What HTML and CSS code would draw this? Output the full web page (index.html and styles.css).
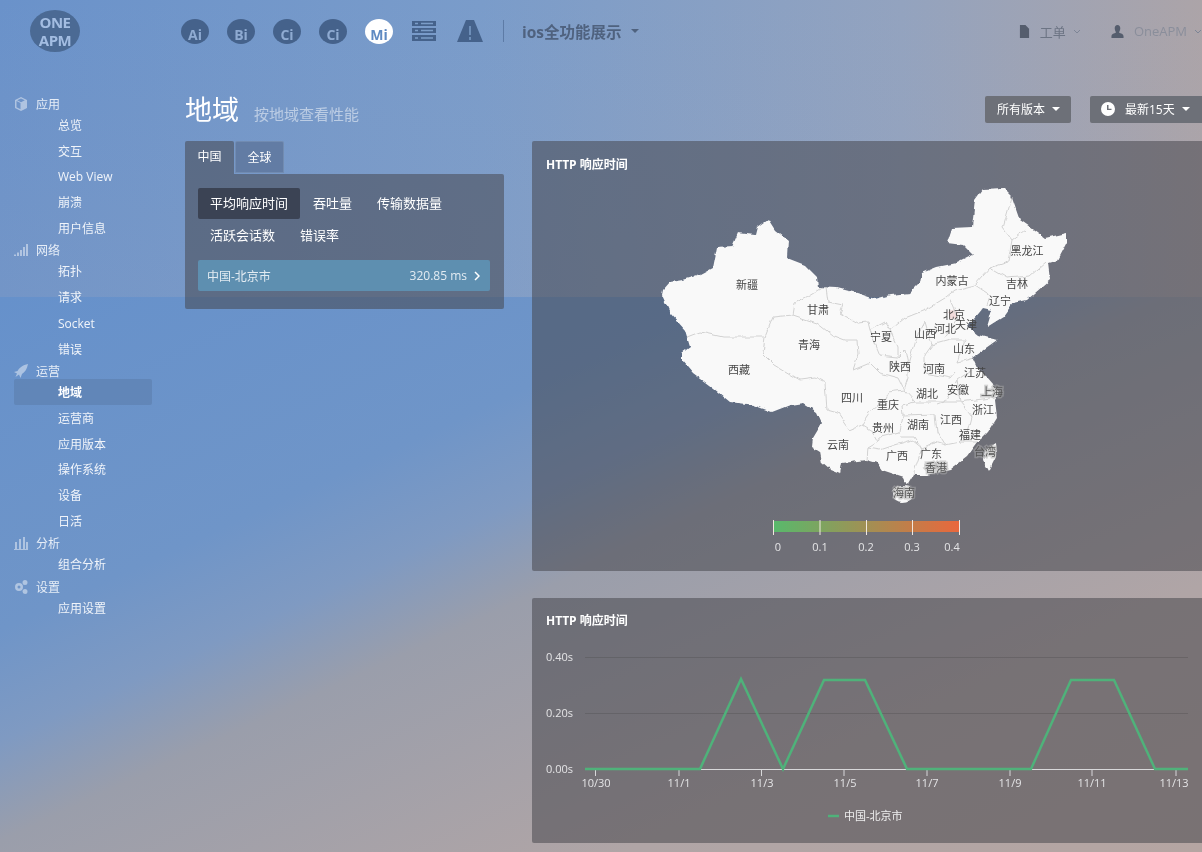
FILE: index.html
```html
<!DOCTYPE html>
<html lang="zh">

<head>
    <meta charset="UTF-8">
    <title>地域</title>
    <link rel="stylesheet" href="styles.css">
</head>

<body>
    <div class="seam"></div>
    <header class="topbar">
        <div class="logo"><span>ONE</span><span>APM</span></div>
        <nav class="apps">
            <span class="app">Ai</span>
            <span class="app">Bi</span>
            <span class="app">Ci</span>
            <span class="app">Ci</span>
            <span class="app app--on">Mi</span>
            <svg class="app-icon" viewBox="0 0 26 24">
                <path d="M1 2h24v5H1zM1 9h24v5H1zM1 16h24v6H1z" />
                <path class="app-icon__cut" d="M4 4.500h3M4 11.500h3M4 19h3M10 4.500h12M10 11.500h12M10 19h12" />
            </svg>
            <svg class="app-icon" viewBox="0 0 26 24">
                <path d="M9 1h8l9 22H0z" />
                <path class="app-icon__cut" d="M13 7v9M13 18v3" />
            </svg>
        </nav>
        <div class="project">ios全功能展示<i class="caret caret--dark"></i></div>
        <div class="account">
            <svg class="account__icon" viewBox="0 0 12 14"><path d="M1 0h6l4 4v10H1z" /></svg>
            <span class="account__name">工单</span>
            <svg class="chev" viewBox="0 0 8 5"><path d="M1 1l3 3 3-3" /></svg>
            <svg class="account__icon account__icon--user" viewBox="0 0 14 14"><path d="M7 0c2 0 3 1.500 3 3.500S9 7 8.500 8c2 1 5 1.500 5 4v2H.5v-2c0-2.500 3-3 5-4C5 7 4 5.500 4 3.500S5 0 7 0z" /></svg>
            <span class="account__name account__name--light">OneAPM</span>
            <svg class="chev" viewBox="0 0 8 5"><path d="M1 1l3 3 3-3" /></svg>
        </div>
    </header>

    <div class="layout">
        <aside class="side">
            <div class="side__head">
                <svg viewBox="0 0 14 14"><path d="M7 0l6 3v8l-6 3-6-3V3zM2.500 4v6.200L6.500 12.300V6zM7 1.500L3.200 3.300 7 5.200l3.800-1.900z" /></svg>
                应用
            </div>
            <a class="side__item">总览</a>
            <a class="side__item">交互</a>
            <a class="side__item">Web View</a>
            <a class="side__item">崩溃</a>
            <a class="side__item">用户信息</a>
            <div class="side__head">
                <svg viewBox="0 0 14 14"><path d="M0 13h2v-1.500H0zM3 13h2V9.500H3zM6 13h2V7H6zM9 13h2V4H9zM12 13h2V1h-2z" /></svg>
                网络
            </div>
            <a class="side__item">拓扑</a>
            <a class="side__item">请求</a>
            <a class="side__item">Socket</a>
            <a class="side__item">错误</a>
            <div class="side__head">
                <svg viewBox="0 0 14 14"><path d="M14 0C9 1 5 4 3.500 7L0 8l3 1.500L1.500 13 5 10.500 6.500 14l1.500-4C11 8 13 5 14 0z" /></svg>
                运营
            </div>
            <a class="side__item side__item--on">地域</a>
            <a class="side__item">运营商</a>
            <a class="side__item">应用版本</a>
            <a class="side__item">操作系统</a>
            <a class="side__item">设备</a>
            <a class="side__item">日活</a>
            <div class="side__head">
                <svg viewBox="0 0 14 14"><path d="M1 6h2v7H1zM5 3h2v10H5zM9 1h2v12H9zM12 6h2v7h-2zM0 13h14v1H0z" /></svg>
                分析
            </div>
            <a class="side__item">组合分析</a>
            <div class="side__head">
                <svg viewBox="0 0 14 14"><path fill-rule="evenodd" d="M5 3a4 4 0 1 1 0 8 4 4 0 0 1 0-8zm0 2.500a1.500 1.500 0 1 0 0 3 1.500 1.500 0 0 0 0-3zM11 0a2.500 2.500 0 1 1 0 5 2.500 2.500 0 0 1 0-5zm0 9a2.500 2.500 0 1 1 0 5 2.500 2.500 0 0 1 0-5z" /></svg>
                设置
            </div>
            <a class="side__item">应用设置</a>
        </aside>

        <main class="main">
            <div class="page-head">
                <h1>地域</h1>
                <small>按地域查看性能</small>
                <div class="page-head__btns">
                    <button class="btn">所有版本<i class="caret"></i></button>
                    <button class="btn btn--time">
                        <svg viewBox="0 0 14 14"><path fill-rule="evenodd" d="M7 0a7 7 0 1 1 0 14A7 7 0 0 1 7 0zM6 3v5h4.500V6.700H7.500V3z" /></svg>
                        最新15天<i class="caret"></i>
                    </button>
                </div>
            </div>

            <div class="cols">
                <section class="left">
                    <div class="tabs">
                        <span class="tab tab--on">中国</span>
                        <span class="tab">全球</span>
                    </div>
                    <div class="left__box">
                        <div class="pills">
                            <span class="pill pill--on">平均响应时间</span>
                            <span class="pill">吞吐量</span>
                            <span class="pill">传输数据量</span>
                            <span class="pill">活跃会话数</span>
                            <span class="pill">错误率</span>
                        </div>
                        <div class="city">
                            <span>中国-北京市</span>
                            <span class="city__val">320.85 ms</span>
                            <svg class="city__arrow" viewBox="0 0 6 10"><path d="M1 1l4 4-4 4" /></svg>
                        </div>
                    </div>
                </section>

                <section class="right">
                    <div class="panel panel--map">
                        <h4>HTTP 响应时间</h4>
                        <svg class="map" viewBox="532 175 670 396">
                            <defs>
                                <filter id="rough" x="-5%" y="-5%" width="110%" height="110%">
                                    <feTurbulence type="fractalNoise" baseFrequency="0.11" numOctaves="2" seed="4" />
                                    <feDisplacementMap in="SourceGraphic" scale="5" xChannelSelector="R" yChannelSelector="G" />
                                </filter>
                                <linearGradient id="scale">
                                    <stop offset="0" stop-color="#58b96c" />
                                    <stop offset="1" stop-color="#ea673c" />
                                </linearGradient>
                            </defs>
                            <g filter="url(#rough)">
                                <path class="land" d="M663 290L670 282 683 280 700 275 713 268 717 248 732 247 738 233 755 235 757 227 768 219 775 230 788 240 787 258 805 265 817 277 818 287 837 288 857 293 875 299 890 295 910 293 920 283 922 273 937 267 957 263 973 255 963 245 947 243 952 228 972 227 975 200 983 189 1003 188 1012 197 1020 220 1030 227 1045 238 1067 233 1067 243 1058 260 1048 263 1050 280 1027 300 1013 303 1003 317 987 327 992 310 983 308 973 320 968 327 978 335 997 340 983 350 973 357 978 368 987 377 1000 392 995 400 997 417 987 433 978 442 967 457 950 470 927 475 913 475 907 485 903 477 882 470 877 463 867 460 842 463 840 474 830 470 822 463 820 452 812 447 813 438 822 423 817 412 803 403 790 405 772 412 753 405 730 402 713 388 693 373 682 360 682 353 690 347 685 330 670 313 662 295z" />
                                <ellipse class="land" cx="903" cy="494" rx="11" ry="8" />
                                <path class="land" d="M996 443L997 455 989 471 983 460 985 450z" />
                                <path class="beijing" d="M948 311l5-2 5 3-1 6-6 1-3-3z" />
                                <path class="border" d="M687 337L700 332 723 337 765 337 773 317 793 315 795 303 810 295 823 287" />
                                <path class="border" d="M826 287L828 302 843 305 840 313 857 323 868 322 870 330" />
                                <path class="border" d="M870 330L885 322 890 330 898 347 898 357 880 355 875 343z" />
                                <path class="border" d="M793 315L817 323 832 335 845 340 857 340 858 355 853 370" />
                                <path class="border" d="M765 337L763 353 775 365 800 380 815 378 825 383 827 410 838 413 850 430 862 425 872 431 878 442 868 448 867 460" />
                                <path class="border" d="M853 370L870 363 880 373 898 378 904 390 888 392 884 400 872 410 862 425" />
                                <path class="border" d="M898 357L905 350 908 365 908 378 904 390 915 402 902 405 903 416 900 432 880 437 878 442" />
                                <path class="border" d="M890 330L905 318 925 310 945 298 955 290 975 285 990 268 1008 262 1012 240 1025 230" />
                                <path class="border" d="M908 365L915 340 925 322 932 345 925 355 925 373 950 378 955 372" />
                                <path class="border" d="M932 345L950 340 965 340 958 362 975 358" />
                                <path class="border" d="M915 402L945 402 957 380 975 368" />
                                <path class="border" d="M957 380L960 402 975 400 990 398" />
                                <path class="border" d="M903 416L935 415 937 432 945 445 960 442 978 442" />
                                <path class="border" d="M937 405L945 402 960 402 972 417 968 432 958 442" />
                                <path class="border" d="M900 437L915 437 922 448 935 442 945 445" />
                                <path class="border" d="M868 448L880 450 895 445 912 440 922 448 913 475" />
                                <path class="border" d="M990 268L1007 278 1030 276 1046 262" />
                                <path class="border" d="M975 285L990 295 987 306" />
                                <path class="border" d="M1012 240L1003 228 1012 197" />
                                <path class="border" d="M950 300L958 318 945 338" />
                            </g>

                            <text x="747" y="289">新疆</text>
                            <text x="818" y="314">甘肃</text>
                            <text x="809" y="349">青海</text>
                            <text x="739" y="374">西藏</text>
                            <text x="952" y="285">内蒙古</text>
                            <text x="1027" y="255">黑龙江</text>
                            <text x="1017" y="288">吉林</text>
                            <text x="1000" y="305">辽宁</text>
                            <text x="954" y="319">北京</text>
                            <text x="966" y="329">天津</text>
                            <text x="945" y="333">河北</text>
                            <text x="925" y="338">山西</text>
                            <text x="881" y="341">宁夏</text>
                            <text x="964" y="353">山东</text>
                            <text x="900" y="371">陕西</text>
                            <text x="934" y="373">河南</text>
                            <text x="975" y="377">江苏</text>
                            <text x="958" y="394">安徽</text>
                            <text class="halo" x="992" y="396">上海</text>
                            <text x="927" y="398">湖北</text>
                            <text x="852" y="402">四川</text>
                            <text x="888" y="409">重庆</text>
                            <text x="983" y="414">浙江</text>
                            <text x="951" y="424">江西</text>
                            <text x="883" y="432">贵州</text>
                            <text x="918" y="429">湖南</text>
                            <text x="970" y="439">福建</text>
                            <text x="838" y="449">云南</text>
                            <text x="897" y="460">广西</text>
                            <text x="931" y="458">广东</text>
                            <text class="halo" x="936" y="472">香港</text>
                            <text class="halo" x="985" y="456">台湾</text>
                            <text class="halo" x="904" y="497">海南</text>

                            <rect x="773" y="521" width="187" height="11" fill="url(#scale)" />
                            <path class="scale-tick" d="M773.500 520v15M820 520v15M866.500 520v15M912.500 520v15M959.500 520v15" />
                            <text class="axis" x="778" y="551">0</text>
                            <text class="axis" x="820" y="551">0.1</text>
                            <text class="axis" x="866" y="551">0.2</text>
                            <text class="axis" x="912" y="551">0.3</text>
                            <text class="axis" x="952" y="551">0.4</text>
                        </svg>
                    </div>

                    <div class="panel panel--chart">
                        <h4>HTTP 响应时间</h4>
                        <svg class="chart" viewBox="532 631 670 212">
                            <path class="grid" d="M585 657.500H1188M585 713.500H1188" />
                            <path class="axis-line" d="M585 769.500H1188" />
                            <path class="axis-line" d="M595.500 769v7M679 769v7M761.500 769v7M844 769v7M927 769v7M1010 769v7M1092 769v7M1176 769v7" />
                            <polyline class="line" points="585,769 700,769 741,679 783,769 824,680 865,680 907,769 1031,769 1071,680 1114,680 1155,769 1188,769" />
                            <text class="axis axis--y" x="573" y="661">0.40s</text>
                            <text class="axis axis--y" x="573" y="717">0.20s</text>
                            <text class="axis axis--y" x="573" y="773">0.00s</text>
                            <text class="axis" x="596" y="787">10/30</text>
                            <text class="axis" x="679" y="787">11/1</text>
                            <text class="axis" x="762" y="787">11/3</text>
                            <text class="axis" x="845" y="787">11/5</text>
                            <text class="axis" x="927" y="787">11/7</text>
                            <text class="axis" x="1010" y="787">11/9</text>
                            <text class="axis" x="1092" y="787">11/11</text>
                            <text class="axis" x="1174" y="787">11/13</text>
                            <path class="line" d="M828 816h11" />
                            <text class="legend" x="844" y="820">中国-北京市</text>
                        </svg>
                    </div>
                </section>
            </div>
        </main>
    </div>
</body>

</html>
```

FILE: styles.css
```css
* {
    box-sizing: border-box;
}

html,
body {
    margin: 0;
    height: 100%;
}

body {
    position: relative;
    height: 852px;
    overflow: hidden;
    font-family: "Open Sans", "Noto Sans CJK SC", sans-serif;
    font-size: 12px;
    color: #fff;
    background: linear-gradient(to bottom right, #6691cb 0%, #6f95c8 30%, #7f9ac2 40%, #9a9eab 49%, #b0a5a6 76%, #b5a5a2 100%) 0 297px / 100% 555px no-repeat;
}

/* the top part of the backdrop is a separate, greyer gradient */
.seam {
    position: absolute;
    left: 0;
    top: 0;
    width: 100%;
    height: 297px;
    background:
        linear-gradient(to bottom, rgba(160, 165, 185, 0), rgba(160, 165, 185, .17)),
        linear-gradient(to right, #6a92ca 0%, #7a9cca 40%, #93a3bf 75%, #aca4a8 100%);
}

/* top bar */
.topbar {
    position: relative;
    display: flex;
    align-items: center;
    height: 62px;
    padding-left: 30px;
    filter: blur(.45px);
}

.logo {
    display: flex;
    flex-direction: column;
    align-items: center;
    justify-content: center;
    width: 50px;
    height: 42px;
    border-radius: 50%;
    background: #4b6a94;
    color: #a3bde2;
    font-size: 15px;
    font-weight: 700;
    line-height: 18px;
    letter-spacing: -.5px;
}

.apps {
    display: flex;
    align-items: center;
    margin-left: 101px;
}

.app {
    display: flex;
    align-items: flex-end;
    justify-content: center;
    width: 28px;
    height: 25px;
    margin-right: 18px;
    border-radius: 50%;
    background: #45628b;
    color: #8fabd2;
    font-size: 14px;
    font-weight: 700;
    line-height: 18px;
}

.app--on {
    background: #fff;
    color: #5f8ac2;
}

.app-icon {
    width: 26px;
    height: 24px;
    margin-right: 20px;
    fill: #45628b;
}

.app-icon__cut {
    fill: none;
    stroke: #7b9dc8;
    stroke-width: 1.500;
}

.project {
    display: flex;
    align-items: center;
    height: 22px;
    padding-left: 18px;
    border-left: 1px solid #5d7ba6;
    color: #4f627f;
    font-size: 15.500px;
    font-weight: 700;
}

.caret {
    display: inline-block;
    margin-left: 7px;
    border-top: 4px solid #fff;
    border-left: 4px solid transparent;
    border-right: 4px solid transparent;
}

.caret--dark {
    margin-left: 9px;
    border-top-color: #4f627f;
}

.account {
    display: flex;
    align-items: center;
    margin-left: auto;
    color: #6c7484;
    font-size: 13px;
}

.account__name--light {
    color: #8a8e9b;
}

.account__icon {
    width: 11px;
    height: 13px;
    margin-right: 10px;
    fill: #555d6d;
}

.account__icon--user {
    width: 13px;
    margin-left: 30px;
}

.chev {
    width: 8px;
    height: 5px;
    margin-left: 7px;
    fill: none;
    stroke: #7d8596;
}

/* sidebar + content */
.layout {
    position: relative;
    display: flex;
    padding-top: 34px;
    filter: blur(.45px);
}

.side {
    flex: 0 0 185px;
    padding-left: 14px;
    padding-right: 33px;
    position: relative;
}

.side__head {
    display: flex;
    align-items: center;
    height: 16px;
    margin-top: 2px;
    color: #e6edf7;
}

.side__head:first-child {
    margin-top: 0;
}

.side__head svg {
    width: 14px;
    height: 14px;
    margin-right: 8px;
    fill: rgba(255, 255, 255, .45);
}

.side__item {
    display: block;
    height: 25.700px;
    padding-left: 44px;
    line-height: 27.700px;
    color: #f0f4fa;
}

.side__item--on {
    border-radius: 2px;
    background: rgba(70, 90, 125, .22);
    font-weight: 700;
    color: #fff;
}

.main {
    flex: 1;
    min-width: 0;
    position: relative;
}

.page-head {
    display: flex;
    align-items: flex-start;
    height: 45px;
}

.page-head h1 {
    margin: -4px 0 0;
    font-size: 27px;
    font-weight: 400;
    line-height: 36px;
}

.page-head small {
    margin: 6px 0 0 15px;
    color: rgba(255, 255, 255, .5);
    font-size: 15px;
    line-height: 24px;
}

.page-head__btns {
    display: flex;
    gap: 19px;
    margin-left: auto;
}

.btn {
    display: flex;
    align-items: center;
    height: 27px;
    padding: 0 11px 2px 12px;
    border: 0;
    border-radius: 2px;
    background: #6d7078;
    color: #fff;
    font-family: inherit;
    font-size: 12px;
}

.btn svg {
    width: 14px;
    height: 14px;
    margin-right: 10px;
    fill: #fff;
}

.btn--time {
    width: 112px;
    padding-left: 11px;
    padding-right: 0;
    border-radius: 2px 0 0 2px;
}

.cols {
    display: flex;
    gap: 28px;
}

.left {
    flex: 0 0 319px;
}

.tabs {
    display: flex;
    gap: 1px;
}

.tab {
    width: 49px;
    height: 32px;
    border: 1px solid rgba(130, 155, 190, .5);
    border-radius: 2px 2px 0 0;
    background: rgba(85, 105, 140, .6);
    text-align: center;
    line-height: 31px;
    font-size: 12px;
}

.tab--on {
    height: 33px;
    border: 0;
    background: rgba(68, 68, 72, .52);
    line-height: 32px;
}

.left__box {
    height: 135px;
    padding: 14px 14px 0 13px;
    border-radius: 0 2px 2px 2px;
    background: rgba(68, 68, 72, .52);
}

.pills {
    display: flex;
    flex-wrap: wrap;
    gap: 1px;
}

.pill {
    height: 31px;
    padding: 0 12px;
    border-radius: 2px;
    font-size: 13px;
    line-height: 30px;
}

.pill--on {
    background: #3b4354;
}

.city {
    display: flex;
    align-items: center;
    height: 31px;
    margin-top: 9px;
    padding: 0 10px 0 9px;
    border-radius: 2px;
    background: #5e8fb0;
    color: #e2ebf2;
}

.city__val {
    margin-left: auto;
}

.city__arrow {
    width: 6px;
    height: 10px;
    margin-left: 7px;
    fill: none;
    stroke: #fff;
    stroke-width: 1.500;
}

.right {
    flex: 1;
    min-width: 0;
}

.panel {
    border-radius: 2px 0 0 2px;
    background: rgba(68, 68, 72, .52);
}

.panel h4 {
    margin: 0;
    padding: 14px 14px 0;
    font-size: 12px;
    font-weight: 700;
    line-height: 20px;
}

.panel--map {
    height: 430px;
}

.panel--chart {
    height: 245px;
    margin-top: 27px;
}

.panel--chart h4 {
    padding-top: 13px;
}

.map,
.chart {
    display: block;
    width: 670px;
}

.map {
    height: 396px;
}

.chart {
    height: 212px;
}

.map text {
    fill: #454545;
    font-size: 11px;
    text-anchor: middle;
}

.map .halo {
    stroke: rgba(170, 170, 170, .5);
    stroke-width: 3px;
    paint-order: stroke;
    fill: #555;
}

.land {
    fill: #f9f9f9;
}

.beijing {
    fill: #f3dcdc;
}

.border {
    fill: none;
    stroke: #d2d2d2;
    stroke-width: 1;
}

.scale-tick {
    stroke: #f1e8df;
    stroke-width: 1;
}

.map .axis,
.chart .axis {
    fill: #e4e4e6;
    font-size: 11px;
    text-anchor: middle;
}

.chart .axis--y {
    text-anchor: end;
}

.grid {
    stroke: rgba(60, 60, 60, .25);
    stroke-width: 1;
}

.axis-line {
    stroke: #d8d8da;
    stroke-width: 1;
    fill: none;
}

.line {
    fill: none;
    stroke: #4fb27a;
    stroke-width: 2.500;
}

.legend {
    fill: #eee;
    font-size: 11px;
}
```
